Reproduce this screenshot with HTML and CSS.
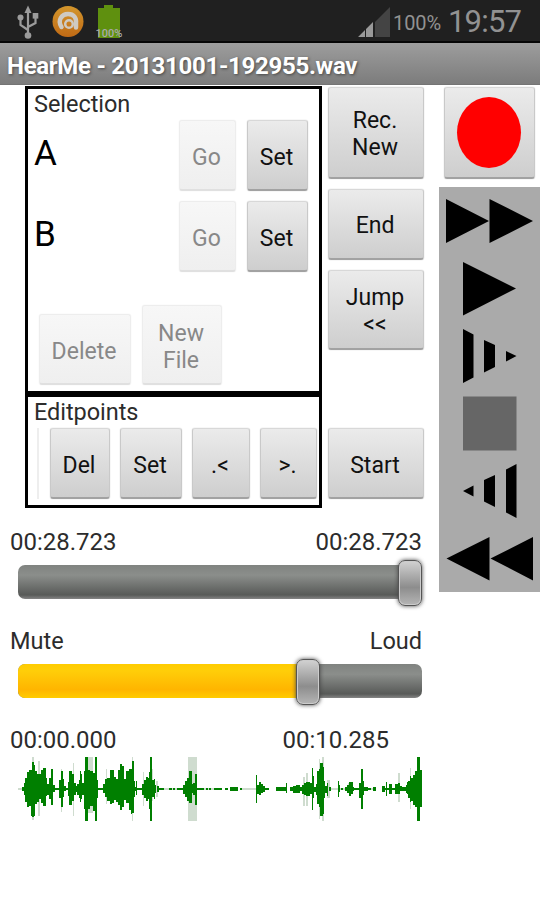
FILE: index.html
```html
<!DOCTYPE html>
<html lang="en">
<head>
<meta charset="utf-8">
<title>HearMe</title>
<link rel="stylesheet" href="styles.css">
</head>
<body>
<header class="status">
  <svg class="status-icons" width="130" height="42" viewBox="0 0 130 42">
    <g stroke="#9b9b9b" fill="none" stroke-width="2.200"><path d="M28 12V34M28 30L20.500 25V18M28 27L35.500 23V16"/></g>
    <g fill="#9b9b9b"><path d="M28 5.500L31.500 13H24.500Z"/><circle cx="28" cy="35.500" r="3.300"/><circle cx="20.500" cy="17.500" r="3"/><rect x="32.700" y="13" width="5.600" height="5.600"/></g>
    <defs><linearGradient id="av" x2="0" y2="1"><stop stop-color="#d3962c"/><stop offset="1" stop-color="#c06a15"/></linearGradient></defs>
    <circle cx="68" cy="21.500" r="15.500" fill="url(#av)"/>
    <path d="M61.500 27C57 20 62 14 68 14C74 14 76.500 18 76 23V27.500" fill="none" stroke="#cfcac2" stroke-width="4.500" stroke-linecap="round"/>
    <circle cx="69" cy="24" r="3.800" fill="none" stroke="#cfcac2" stroke-width="2.500"/>
    <path d="M98 8H104V5H113V8H120V38H98Z" fill="#5f900f"/>
    <text x="109" y="37" class="tiny">100%</text>
  </svg>
  <svg class="signal" width="34" height="32" viewBox="0 0 34 32">
    <path d="M17 16L32 1V31H17Z" fill="#444"/><path d="M0 31L7 24V31ZM8 23L15 16V31H8Z" fill="#999"/>
  </svg>
  <span class="percent">100%</span>
  <span class="clock">19:57</span>
</header>
<h1 class="title">HearMe - 20131001-192955.wav</h1>
<main class="main">
  <section class="left">
    <div class="upper">
      <div class="panels">
        <div class="panel selection">
          <div class="label">Selection</div>
          <div class="row"><span class="point">A</span><button class="btn go off">Go</button><button class="btn set">Set</button></div>
          <div class="row"><span class="point">B</span><button class="btn go off">Go</button><button class="btn set">Set</button></div>
          <div class="row files"><button class="btn delete off">Delete</button><button class="btn file off">New<br>File</button></div>
        </div>
        <div class="panel edit">
          <div class="label">Editpoints</div>
          <div class="row points"><i class="sliver"></i><button class="btn del">Del</button><button class="btn set2">Set</button><button class="btn prev">.&lt;</button><button class="btn next">&gt;.</button></div>
        </div>
      </div>
      <div class="jumps">
        <button class="btn rec">Rec.<br>New</button>
        <button class="btn end">End</button>
        <button class="btn jump">Jump<br>&lt;&lt;</button>
        <button class="btn start">Start</button>
      </div>
    </div>
    <div class="times"><span>00:28.723</span><span>00:28.723</span></div>
    <div class="slider"><i class="thumb at-end"></i></div>
    <div class="times"><span class="word">Mute</span><span class="word">Loud</span></div>
    <div class="slider volume"><i class="fill"></i><i class="thumb at-volume"></i></div>
    <div class="times wave-times"><span>00:00.000</span><span>00:10.285</span></div>
    <svg class="wave" id="wave" width="404" height="66" viewBox="18 756 404 66"></svg>
  </section>
  <aside class="right">
    <button class="btn record"><i class="dot"></i></button>
    <svg class="transport" width="101" height="405" viewBox="439 187 101 405">
      <path d="M446 199L489 221L446 243ZM489.500 199L533 221L489.500 243ZM463 262L516 288.500L463 315.500Z"/>
      <path d="M463 329L473.500 334.500V377.500L463 383ZM484 340L495 345V367L484 372.500ZM506 351L516.500 356L506 361.500Z"/>
      <path class="stop" d="M463 396.500H516.500V450.500H463Z"/>
      <path d="M463 491L473.500 485.500V496.500ZM484 480L495 475V507L484 501.500ZM506 469.500L516.500 464V518L506 512.500Z"/>
      <path d="M446.500 558.500L489.500 537V580.500ZM490.500 558.500L533 537V580.500Z"/>
    </svg>
  </aside>
</main>
<script src="wave.js"></script>
</body>
</html>
```
FILE: styles.css
```css
* { box-sizing: border-box; }
body { margin: 0; width: 540px; height: 900px; overflow: hidden; background: #fff; font-family: Roboto, "Liberation Sans", sans-serif; color: #2c2c2c; }
.status { display: flex; height: 43px; background: #202020; border-bottom: 2px solid #050505; color: #929292; }
.status-icons { flex: none; margin-right: 228px; }
.tiny { font-size: 11px; font-weight: 500; text-anchor: middle; fill: #aaa; }
.signal { flex: none; margin-top: 6px; }
.percent { font-size: 20px; line-height: 46px; margin-left: 1px; letter-spacing: -.1px; }
.clock { font-size: 31px; line-height: 43px; margin-left: 7px; letter-spacing: -.8px; }
.title { margin: 0; height: 42px; padding-left: 7px; background: linear-gradient(#9d9d9d, #7c7c7c); border-bottom: 1px solid #747474; color: #fff; font-size: 24px; line-height: 46px; font-weight: 700; white-space: nowrap; text-shadow: 1px 1px 3px #444; letter-spacing: -.3px; }
.main { display: flex; }
.left { width: 439px; }
.upper { display: flex; padding: 1px 0 0 25px; gap: 6px; }
.panels { width: 297px; }
.panel { border: 3px solid #000; padding-left: 6px; }
.selection { height: 308px; }
.edit { height: 114px; }
.label { font-size: 23.500px; line-height: 30px; height: 31px; letter-spacing: -.05px; }
.row { display: flex; height: 71px; margin-bottom: 10px; }
.point { font-size: 35px; line-height: 67px; width: 145px; color: #000; }
.btn { display: flex; align-items: center; justify-content: center; flex: none; height: 71px; margin: 0; padding: 4px 2px 0 0; font: 23px/27px Roboto, "Liberation Sans", sans-serif; color: #111; background: linear-gradient(#ebebeb, #cecece); border: 1px solid #c9c9c9; border-top-color: #d8d8d8; border-bottom: 2px solid #a2a2a2; border-radius: 3px; box-shadow: 0 0 1px #aaa; }
.off { color: #888; background: linear-gradient(#f7f7f7, #efefef); border-color: #ededed; border-bottom-color: #e0e0e0; box-shadow: 0 0 1px #ddd; }
.go { width: 57px; margin-right: 11px; }
.set { width: 61px; }
.files { height: 80px; margin: 33px 0 0 5px; align-items: flex-end; gap: 11px; }
.delete { width: 92px; }
.file { width: 80px; height: 80px; }
.points { margin-left: -6px; }
.sliver { width: 11px; border-right: 2px solid #eee; margin-right: 11px; }
.del { width: 60px; margin-right: 10px; }
.set2 { width: 62px; margin-right: 10px; }
.prev { width: 58px; margin-right: 10px; }
.next { width: 57px; }
.jumps { display: flex; flex-direction: column; width: 96px; gap: 10px; padding-top: 1px; }
.rec { height: 92px; padding-top: 2px; }
.end { padding-top: 2px; }
.jump { height: 80px; padding-top: 2px; }
.start { margin-top: 68px; }
.times { display: flex; justify-content: space-between; padding: 0 17px 0 10px; margin-top: 20px; height: 29px; font-size: 24px; line-height: 29px; }
.word { font-size: 23.500px; }
.slider { position: relative; height: 34px; width: 404px; margin: 8px 0 0 18px; border-radius: 7px; background: linear-gradient(#808380 0, #8b8e8b 30%, #585a58 88%, #858585); }
.slider + .times { margin-top: 28px; }
.fill { display: block; width: 290px; height: 34px; border-radius: 7px 0 0 7px; background: linear-gradient(#fc0, #ffce09 20%, #ffb500 75%, #fc0); }
.thumb { position: absolute; top: -5px; width: 24px; height: 46px; border-radius: 7px; border: 1px solid #555; background: linear-gradient(#d2d2d2, #8d8d8d 60%, #b5b5b5); box-shadow: 0 0 4px #444, inset 0 0 0 1px #ccc; }
.at-end { right: 0; }
.at-volume { left: 278px; }
.wave-times { padding-right: 50px; }
.wave { display: block; margin: 1px 0 0 18px; }
.right { width: 101px; padding-top: 2px; }
.record { width: 91px; height: 92px; margin-left: 5px; padding: 0 2px 0 0; }
.dot { width: 64px; height: 71px; border-radius: 50%; background: #f00; margin-bottom: 1px; }
.transport { display: block; margin-top: 8px; background: #aaa; }
.stop { fill: #666; }
```
FILE: wave.js
```js
// Segments of the recording: x, width, peak above and below the axis.
const soft = [
  [18,4,1,1],[32,2,32,31],[38,2,28,27],[61,1,20,23],[73,1,26,27],[88,5,32,24],[106,1,20,15],[132,1,32,32],
  [143,1,17,17],[150,3,20,12],[156,2,8,8],[163,15,1,1],[188,9,32,32],[197,18,1,1],[240,16,1,1],
  [303,2,12,17],[306,2,16,17],[319,1,30,30],[322,2,32,32],[327,3,9,9],[331,14,1,1],[348,4,6,4],[371,5,1,1],[398,2,16,13],[410,1,21,20]
];
const loud = [
  [22,2,2,2],[24,1,6,6],[25,2,11,13],[27,2,17,18],[29,2,19,17],[31,1,19,27],[32,2,27,28],[34,1,24,27],[35,2,18,15],[37,2,15,13],
  [39,2,15,10],[41,2,19,14],[43,3,21,17],[46,1,11,7],[47,2,5,6],[49,2,11,10],[51,2,20,16],[53,2,4,3],[55,4,1,1],
  [59,2,9,9],[61,2,18,18],[63,1,10,8],[64,2,3,2],[66,2,1,1],[68,1,7,7],[69,3,18,16],[72,2,15,12],[74,2,6,6],[76,1,3,3],
  [77,2,5,6],[79,1,9,9],[80,1,18,13],[81,1,15,10],[82,2,6,6],[84,1,18,20],[85,3,32,32],[88,2,19,20],[90,3,18,17],
  [93,2,16,22],[95,2,32,32],[97,1,9,9],[98,5,1,1],[103,2,5,4],[105,2,10,8],[107,3,11,12],[110,2,19,15],
  [112,2,19,14],[114,2,12,11],[116,2,10,13],[118,2,19,16],[120,2,25,21],[122,2,23,18],[124,2,10,11],[126,3,18,14],
  [129,2,20,21],[131,1,20,25],[132,2,28,24],[134,1,8,8],[135,1,2,2],[136,1,8,6],[137,5,1,1],[142,2,5,6],[144,2,9,9],
  [146,2,12,12],[148,1,11,10],[149,1,17,20],[150,2,32,32],[152,2,9,8],[154,1,10,10],[155,1,4,4],[157,2,3,3],[159,5,1,1],
  [169,3,1,1],[173,2,1,1],[177,6,1,1],[183,2,4,5],[185,2,8,8],[187,2,11,12],[189,3,18,14],[192,1,5,4],[193,2,6,6],
  [195,2,15,16],[197,7,1,1],[206,2,1,1],[209,2,1,1],[214,8,1,1],[225,3,1,1],[230,8,2,2],[240,2,1,1],
  [256,1,14,14],[257,2,4,5],[259,2,7,6],[261,2,5,4],[263,2,3,3],[265,4,1,1],[276,10,2,2],[286,1,6,4],[290,3,2,2],
  [293,3,3,4],[296,4,4,4],[300,2,2,2],[302,2,4,5],[304,2,6,6],[306,4,7,7],[310,2,6,5],[312,1,21,21],[313,1,13,9],[314,2,2,3],
  [316,1,5,6],[317,2,18,15],[319,2,20,18],[320,3,26,27],[323,1,22,25],[324,1,8,9],[325,2,3,4],[327,1,6,7],[329,2,2,2],
  [338,1,8,8],[339,1,4,3],[341,2,1,1],[345,2,2,2],[347,2,4,4],[349,2,7,7],[351,2,7,5],[353,1,2,2],[354,5,1,1],
  [359,2,6,9],[361,2,20,20],[363,1,8,6],[364,4,2,2],[368,3,1,1],[373,3,2,2],[382,3,3,3],[385,1,1,1],[386,1,7,7],
  [387,2,1,1],[389,3,5,5],[392,3,1,1],[395,3,5,5],[398,2,6,5],[400,2,3,2],[402,4,2,2],[406,1,4,4],[407,1,7,5],
  [408,2,8,9],[410,1,13,13],[411,2,11,12],[413,2,14,16],[415,2,18,18],[417,3,32,32],[420,2,19,18]
];
const path = list => list.map(([x, w, up, down]) => `M${x} ${789 - up}h${w}V${789 + down}h${-w}Z`).join("");
document.getElementById("wave").innerHTML =
  `<path fill="#cfdccf" d="${path(soft)}"/><path fill="#007f00" d="${path(loud)}"/>`;
```
